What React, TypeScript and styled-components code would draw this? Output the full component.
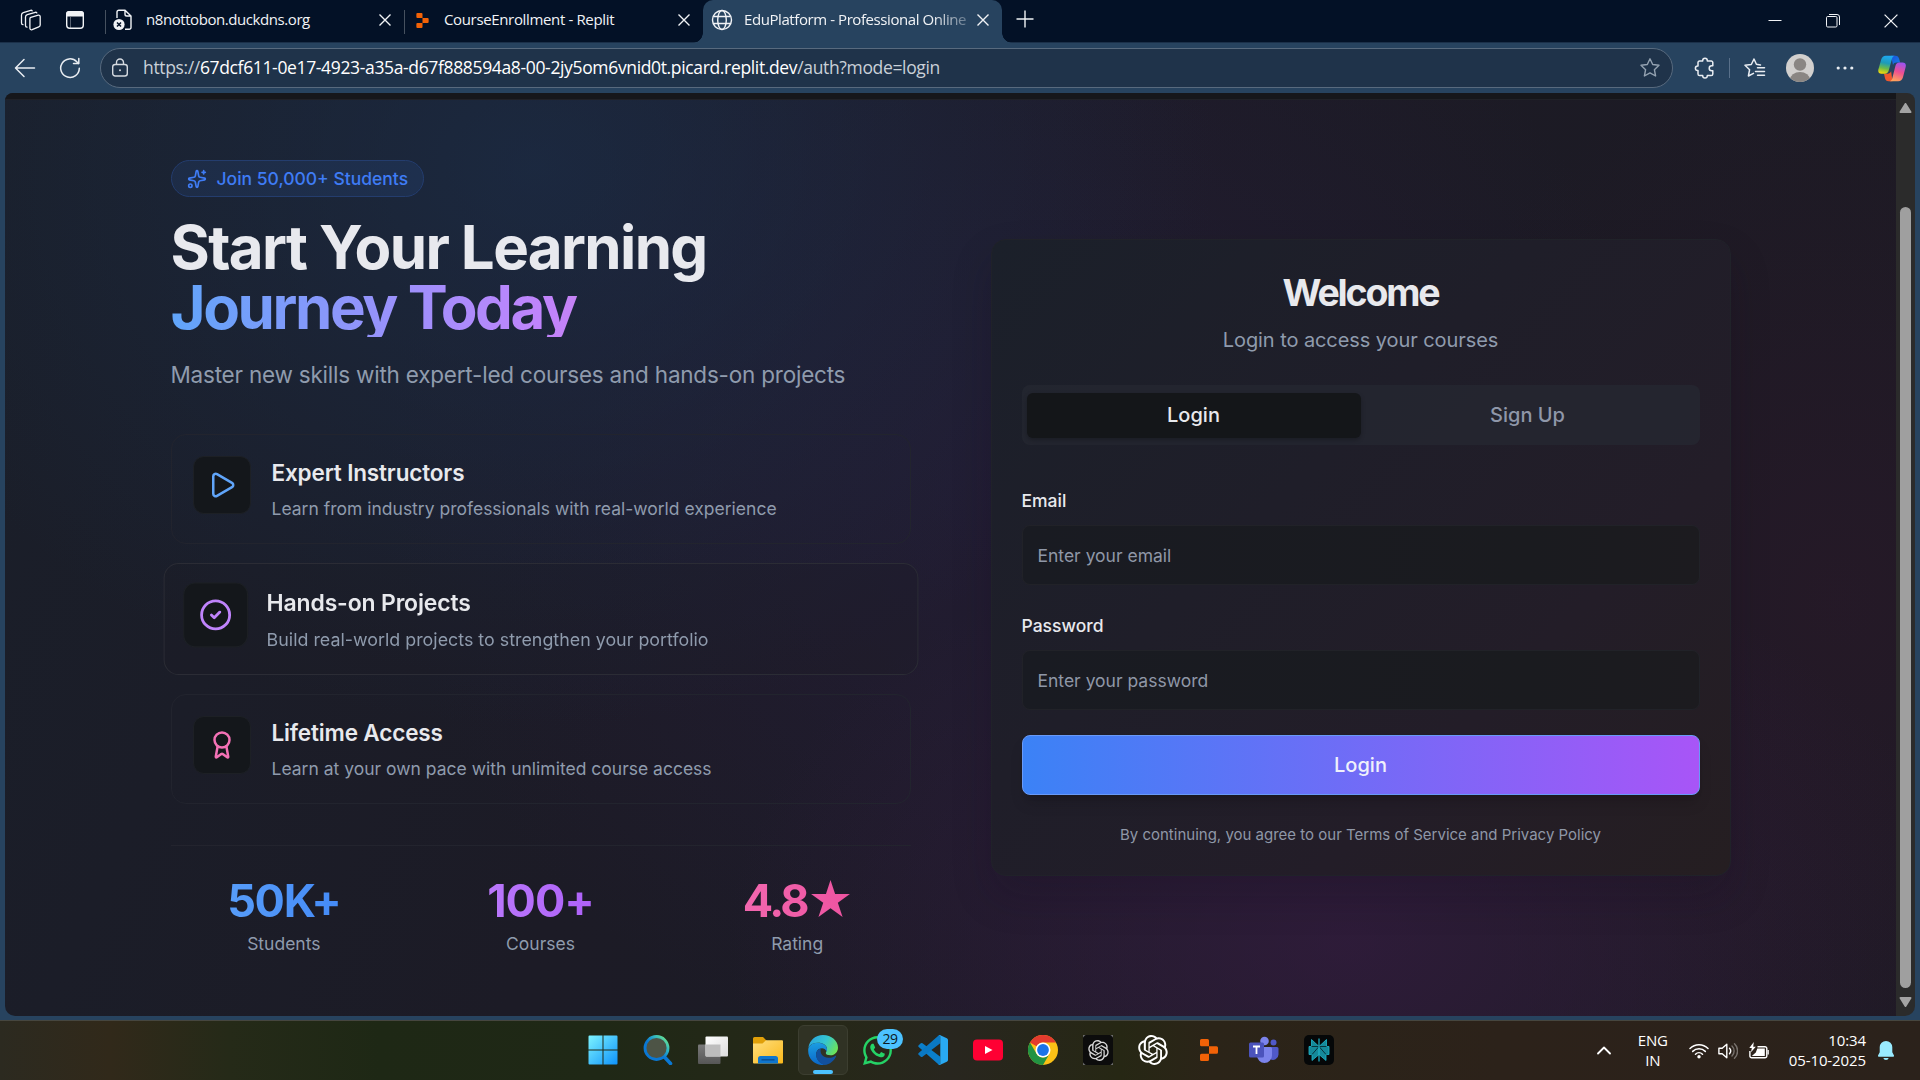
import React from "react";
import styled, { createGlobalStyle, css } from "styled-components";
import { Sparkles, Play, CircleCheck, Award } from "lucide-react";
import { FaWhatsapp } from "react-icons/fa";
import { RiOpenaiFill } from "react-icons/ri";

const ui = `"Open Sans", "Noto Sans", sans-serif`;
const inter = `Inter, "DejaVu Sans", sans-serif`;

const GlobalStyle = createGlobalStyle`
  * { box-sizing: border-box; }
  body { margin: 0; background: #031126; overflow: hidden; }
  h1, h2, h3, p { margin: 0; }
  button, input { font: inherit; color: inherit; }
`;

const Screen = styled.div`
  width: 1920px;
  height: 1080px;
  display: flex;
  flex-direction: column;
  overflow: hidden;
  font-family: ${ui};
  background: #27435f;
`;

/* ---------- browser: tab strip ---------- */

const TabStrip = styled.header`
  height: 43px;
  flex: none;
  display: flex;
  background: #031126;
  border-bottom: 1px solid #1b3049;
  color: #f1f3f6;
`;

const StripTools = styled.div`
  width: 105px;
  display: flex;
  align-items: center;
  padding: 0 0 2px 20px;
  gap: 23px;
`;

const Tab = styled.div<{ $active?: boolean; $width: number }>`
  position: relative;
  width: ${(p) => p.$width}px;
  height: 43px;
  display: flex;
  align-items: center;
  padding: 0 13px 3px 8px;
  ${(p) =>
    p.$active
      ? css`
          background: #27435f;
          border-radius: 10px 10px 0 0;
          &::before,
          &::after {
            content: "";
            position: absolute;
            bottom: 0;
            width: 10px;
            height: 10px;
          }
          &::before {
            left: -10px;
            background: radial-gradient(circle at 0 0, transparent 9.5px, #27435f 10px);
          }
          &::after {
            right: -10px;
            background: radial-gradient(circle at 100% 0, transparent 9.5px, #27435f 10px);
          }
        `
      : css`
          &::before {
            content: "";
            position: absolute;
            left: 0;
            top: 10px;
            height: 24px;
            width: 1px;
            background: #46515f;
          }
        `}
`;

const TabIcon = styled.span<{ $gap: number; $left?: number }>`
  display: flex;
  flex: none;
  margin-left: ${(p) => p.$left ?? 0}px;
  margin-right: ${(p) => p.$gap}px;
`;

const TabTitle = styled.span<{ $spacing: number; $fade?: boolean }>`
  flex: 1;
  min-width: 0;
  margin-top: -2px;
  white-space: nowrap;
  font-size: 15px;
  line-height: 22px;
  letter-spacing: ${(p) => p.$spacing}px;
  ${(p) => p.$fade && "-webkit-mask-image: linear-gradient(90deg, #000 84%, rgba(0, 0, 0, 0.3) 100%);"}
`;

const CloseButton = styled.span`
  display: flex;
  flex: none;
`;

const NewTab = styled.div`
  display: flex;
  align-items: center;
  padding: 0 0 4px 14px;
`;

const WindowButtons = styled.div`
  margin-left: auto;
  display: flex;
`;

const WindowButton = styled.div`
  width: 58px;
  display: flex;
  align-items: center;
  justify-content: center;
`;

/* ---------- browser: toolbar ---------- */

const Toolbar = styled.div`
  height: 50px;
  flex: none;
  display: flex;
  align-items: center;
  padding: 0 12px 0 14px;
  color: #e9edf2;
`;

const NavButtons = styled.div`
  width: 86px;
  display: flex;
  align-items: center;
  gap: 23px;
`;

const AddressBar = styled.div`
  width: 1573px;
  height: 40px;
  border: 1px solid #586a7e;
  border-radius: 20px;
  background: #1f334a;
  display: flex;
  align-items: center;
  padding: 0 11px 0 10px;
`;

const Url = styled.span`
  flex: 1;
  margin: -2px 0 0 14px;
  font-size: 17.5px;
  line-height: 24px;
  white-space: nowrap;
  letter-spacing: -0.35px;
  color: #c9d0d8;
`;

const UrlHost = styled.span`
  color: #ffffff;
`;

const ToolbarActions = styled.div`
  flex: 1;
  display: flex;
  align-items: center;
  padding-left: 21px;
`;

const ToolbarDivider = styled.span`
  width: 1px;
  height: 20px;
  margin: 0 13px 0 13px;
  background: #59708a;
`;

const Slot = styled.span<{ $left: number }>`
  display: flex;
  margin-left: ${(p) => p.$left}px;
`;

/* ---------- page ---------- */

const Viewport = styled.main`
  width: 1910px;
  height: 923px;
  flex: none;
  margin-left: 5px;
  display: flex;
  overflow: hidden;
  border-radius: 8px 8px 10px 10px;
`;

const Page = styled.div`
  width: 1891px;
  display: flex;
  flex-direction: column;
  font-family: ${inter};
  background: radial-gradient(ellipse 680px 560px at 28% 8%, rgba(27, 46, 74, 0.68), transparent 100%),
    radial-gradient(ellipse 620px 420px at 71% 92%, rgba(54, 28, 66, 0.68), transparent 100%),
    radial-gradient(ellipse 640px 600px at 54% 42%, rgba(40, 29, 62, 0.55), transparent 100%),
    radial-gradient(ellipse 460px 560px at 97% 55%, rgba(44, 24, 42, 0.55), transparent 100%),
    linear-gradient(115deg, #1a1f2a 0%, #1c1b26 40%, #1c1a23 100%);
`;

const NavEdge = styled.div`
  height: 7px;
  flex: none;
  background: #16171b;
  border-bottom: 1px solid #202127;
`;

const Columns = styled.div`
  width: 1560px;
  margin: 60px auto 0;
  display: grid;
  grid-template-columns: 740px 740px;
  column-gap: 80px;
  align-items: start;
`;

const Intro = styled.section`
  display: flex;
  flex-direction: column;
  align-items: flex-start;
`;

const Pill = styled.div`
  height: 37px;
  display: flex;
  align-items: center;
  gap: 10px;
  padding: 0 15px;
  border: 1px solid #243d6e;
  border-radius: 19px;
  background: rgba(59, 130, 246, 0.1);
  color: #3f7cf5;
  font-size: 17.5px;
  font-weight: 500;
`;

const Headline = styled.h1`
  width: 100%;
  margin-top: 20px;
  font-size: 60px;
  line-height: 60px;
  font-weight: 700;
  letter-spacing: -1.63px;
  color: #e8e9ee;
`;

const HeadlineAccent = styled.span`
  display: block;
  letter-spacing: -2.4px;
  color: transparent;
  background: linear-gradient(90deg, #60a5fa, #c084fc, #f472b6);
  -webkit-background-clip: text;
  background-clip: text;
`;

const Lead = styled.p`
  margin-top: 20px;
  font-size: 22.5px;
  line-height: 35px;
  letter-spacing: -0.215px;
  color: #8f9bad;
`;

const FeatureList = styled.div`
  width: 100%;
  margin-top: 42px;
  display: grid;
  gap: 20px;
`;

const FeatureIcon = styled.div<{ $color: string }>`
  width: 58px;
  height: 58px;
  flex: none;
  display: flex;
  align-items: center;
  justify-content: center;
  border: 1px solid #1d2025;
  border-radius: 11px;
  background: #14171b;
  color: ${(p) => p.$color};
`;

const FeatureCard = styled.article<{ $raised?: boolean }>`
  height: 110px;
  display: flex;
  gap: 21px;
  padding: 21px;
  border: 1px solid ${(p) => (p.$raised ? "#2b2c35" : "#22242e")};
  border-radius: 15px;
  ${(p) =>
    p.$raised &&
    css`
      transform: scale(1.02);
      background: rgba(28, 27, 36, 0.25);
      ${FeatureIcon} {
        transform: scale(1.1);
      }
    `}
`;

const FeatureTitle = styled.h3`
  margin-top: -1px;
  font-size: 22.5px;
  line-height: 35px;
  font-weight: 600;
  letter-spacing: -0.15px;
  color: #e8e9ed;
`;

const FeatureText = styled.p`
  margin-top: 6px;
  font-size: 17.5px;
  line-height: 25px;
  color: #8f9bad;
`;

const Stats = styled.div`
  width: 100%;
  margin-top: 41px;
  padding-top: 30px;
  border-top: 1px solid #23242e;
  display: grid;
  grid-template-columns: repeat(3, 1fr);
  column-gap: 30px;
  text-align: center;
`;

const StatValue = styled.div<{ $from: string; $to: string; $spacing: number }>`
  font-size: 45px;
  line-height: 50px;
  font-weight: 700;
  letter-spacing: ${(p) => p.$spacing}px;
  color: transparent;
  background: linear-gradient(90deg, ${(p) => p.$from}, ${(p) => p.$to});
  -webkit-background-clip: text;
  background-clip: text;
`;

const StatLabel = styled.div`
  margin-top: 5px;
  font-size: 17.5px;
  line-height: 25px;
  color: #8f9bad;
`;

/* ---------- sign-in card ---------- */

const AuthCard = styled.section`
  margin-top: 79px;
  height: 637px;
  display: flex;
  flex-direction: column;
  padding: 30px 30px 0;
  border: 1px solid #202229;
  border-radius: 15px;
  background: linear-gradient(135deg, #1b202a 0%, #1f1e29 40%, #231d28 70%, #251e21 100%);
  box-shadow: 0 20px 40px rgba(20, 12, 30, 0.2);
`;

const CardTitle = styled.h2`
  text-align: center;
  font-size: 37.5px;
  line-height: 46px;
  font-weight: 700;
  letter-spacing: -2.2px;
  color: #e8e9ed;
`;

const CardSubtitle = styled.p`
  margin-top: 9px;
  text-align: center;
  font-size: 20px;
  line-height: 30px;
  letter-spacing: -0.08px;
  color: #8f9bad;
`;

const Segmented = styled.div`
  height: 60px;
  margin-top: 30px;
  display: grid;
  grid-template-columns: 1fr 1fr;
  align-items: center;
  padding: 0 5px;
  border-radius: 8px;
  background: rgba(38, 41, 50, 0.65);
`;

const Segment = styled.button<{ $active?: boolean }>`
  height: 45px;
  border: 0;
  border-radius: 6px;
  font-size: 20px;
  font-weight: 500;
  background: ${(p) => (p.$active ? "#141619" : "transparent")};
  color: ${(p) => (p.$active ? "#e8e9ed" : "#8f97a9")};
  box-shadow: ${(p) => (p.$active ? "0 2px 4px rgba(0, 0, 0, 0.25)" : "none")};
`;

const FieldLabel = styled.label<{ $top: number }>`
  margin-top: ${(p) => p.$top}px;
  font-size: 17.5px;
  line-height: 18px;
  font-weight: 500;
  color: #e8e9ed;
`;

const Field = styled.input`
  width: 100%;
  height: 60px;
  margin-top: 15px;
  padding: 0 15px;
  outline: none;
  border: 1px solid #212228;
  border-radius: 8px;
  background: linear-gradient(90deg, #191b22, #1a1b1f 75%, #1c1b1f);
  font-size: 17.5px;
  &::placeholder {
    color: #8f97a7;
    opacity: 1;
  }
`;

const Submit = styled.button`
  height: 60px;
  flex: none;
  margin-top: 25px;
  border: 1px solid #699af7;
  border-radius: 8px;
  background: linear-gradient(90deg, #3b82f6, #a855f7);
  box-shadow: 0 10px 15px -3px rgba(0, 0, 0, 0.15), 0 4px 6px -4px rgba(0, 0, 0, 0.15);
  font-size: 20px;
  font-weight: 500;
  color: #eff1fb;
`;

const Terms = styled.p`
  margin-top: 30px;
  text-align: center;
  font-size: 15px;
  line-height: 20px;
  color: #8f97a7;
`;

/* ---------- scrollbar ---------- */

const Scrollbar = styled.div`
  width: 19px;
  display: flex;
  flex-direction: column;
  align-items: center;
  padding: 10px 0 9px;
  background: #2b2b2b;
`;

const Thumb = styled.div`
  width: 11px;
  height: 781px;
  margin: 94px 0 auto;
  border-radius: 6px;
  background: #9f9f9f;
`;

/* ---------- taskbar ---------- */

const Taskbar = styled.footer`
  height: 60px;
  flex: none;
  margin-top: 4px;
  display: flex;
  border-top: 1px solid #46463f;
  background: linear-gradient(90deg, #2c2a20 0, #31291a 110px, #252a18 230px, #1e2815 380px, #1f2816 600px, #262818 830px, #28261f 950px, #262714 1120px, #2b2418 1210px, #2c221a 1500px, #2b221b 1920px);
`;

const AppRow = styled.div`
  display: flex;
  gap: 5.1px;
  padding: 4px 0 0 577.5px;
`;

const AppCell = styled.div<{ $active?: boolean }>`
  position: relative;
  width: 50px;
  height: 50px;
  display: flex;
  align-items: center;
  justify-content: center;
  border-radius: 6px;
  border: 1px solid ${(p) => (p.$active ? "#3c3e30" : "transparent")};
  background: ${(p) => (p.$active ? "#303224" : "transparent")};
`;

const RunningMark = styled.span`
  position: absolute;
  bottom: 0;
  width: 20px;
  height: 4px;
  border-radius: 2px;
  background: #4cc2ff;
`;

const CountBadge = styled.span`
  position: absolute;
  left: 23px;
  top: 3px;
  width: 26px;
  height: 20px;
  border-radius: 10px;
  background: #4cc2ff;
  color: #0b1a24;
  font-size: 14px;
  line-height: 20px;
  letter-spacing: -0.5px;
  text-align: center;
`;

const Tray = styled.div`
  margin-left: auto;
  display: flex;
  align-items: center;
  padding-right: 26px;
  color: #ffffff;
`;

const TrayText = styled.div<{ $align: "center" | "right"; $left: number; $spacing: number }>`
  margin: -2px 0 0 ${(p) => p.$left}px;
  text-align: ${(p) => p.$align};
  font-size: 15px;
  line-height: 20px;
  letter-spacing: ${(p) => p.$spacing}px;
  white-space: nowrap;
`;

/* ---------- drawings ---------- */

const Cross = ({ size = 12, w = 1.4 }: { size?: number; w?: number }) => (
  <svg width={size} height={size} viewBox="0 0 12 12" fill="none" stroke="currentColor" strokeWidth={w}>
    <path d="M.5.5l11 11M11.5.5l-11 11" />
  </svg>
);

const WorkspacesIcon = () => (
  <svg width="22" height="22" viewBox="0 0 22 22" fill="none" stroke="currentColor" strokeWidth="1.3" strokeLinejoin="round" strokeLinecap="round">
    <path d="M10.800 8.300 18.300 6.200a1.500 1.500 0 0 1 1.900 1.500v8.200a2 2 0 0 1-1.400 1.900l-6.700 2.900a1.600 1.600 0 0 1-2.200-1.500V9.800a1.600 1.600 0 0 1 .9-1.500z" />
    <path d="M7 18.200a1.700 1.700 0 0 1-1.500-1.700V8.100A2.600 2.600 0 0 1 7.300 5.700l8-2.400a1.400 1.400 0 0 1 1.500.6" />
    <path d="M3 15.600a1.700 1.700 0 0 1-1.500-1.700V6a2.600 2.600 0 0 1 1.800-2.400L10.700 1.300a1.400 1.400 0 0 1 1.500.5" />
  </svg>
);

const TabActionsIcon = () => (
  <svg width="20" height="20" viewBox="0 0 20 20">
    <rect x="1.700" y="1.700" width="16.600" height="16.600" rx="3" fill="none" stroke="currentColor" strokeWidth="1.400" />
    <path d="M1 6.500V4a3 3 0 0 1 3-3h12a3 3 0 0 1 3 3v2.500z" fill="currentColor" />
    <path d="M5.500 7v11" stroke="currentColor" strokeWidth="1" opacity=".35" />
  </svg>
);

const BrokenPageIcon = () => (
  <svg width="20" height="22" viewBox="0 0 20 22">
    <path d="M4 9V3a1.800 1.800 0 0 1 1.800-1.800H12L18 7v11.500a1.800 1.800 0 0 1-1.800 1.800H12M12 1.200V5.200A1.800 1.800 0 0 0 13.800 7H18" fill="none" stroke="currentColor" strokeWidth="1.400" />
    <circle cx="6" cy="15.500" r="5.600" fill="currentColor" />
    <path d="M4 13.500l4 4M8 13.500l-4 4" stroke="#031126" strokeWidth="1.500" />
  </svg>
);

const ReplitIcon = ({ size, height }: { size: number; height: number }) => (
  <svg width={size} height={height} viewBox="0 0 18 22" fill="#f26207">
    <path d="M1.500 0H7.500A1.500 1.500 0 0 1 9 1.500V7.300H1.500A1.500 1.500 0 0 1 0 5.800V1.500A1.500 1.500 0 0 1 1.500 0zM9 7.300h7.500A1.500 1.500 0 0 1 18 8.800v4.400a1.500 1.500 0 0 1-1.500 1.500H9zM1.500 14.700H9v5.800A1.500 1.500 0 0 1 7.500 22h-6A1.500 1.500 0 0 1 0 20.500v-4.300a1.500 1.500 0 0 1 1.500-1.500z" />
  </svg>
);

const GlobeIcon = () => (
  <svg width="22" height="22" viewBox="0 0 22 22" fill="none" stroke="currentColor" strokeWidth="1.400">
    <circle cx="11" cy="11" r="9.500" />
    <ellipse cx="11" cy="11" rx="4.300" ry="9.500" />
    <path d="M2.300 7.500h17.400M2.300 14.500h17.400" />
  </svg>
);

const PlusIcon = () => (
  <svg width="18" height="18" viewBox="0 0 18 18" stroke="currentColor" strokeWidth="1.400">
    <path d="M9 .5v17M.5 9h17" />
  </svg>
);

const BackIcon = () => (
  <svg width="22" height="20" viewBox="0 0 22 20" fill="none" stroke="currentColor" strokeWidth="1.500" strokeLinecap="round" strokeLinejoin="round">
    <path d="M20.500 10H1.800M10 1.500 1.500 10 10 18.500" />
  </svg>
);

const ReloadIcon = () => (
  <svg width="22" height="22" viewBox="0 0 22 22" fill="none" stroke="currentColor" strokeWidth="1.500" strokeLinecap="round" strokeLinejoin="round">
    <path d="M20.300 11.200A9.300 9.300 0 1 1 17.800 4.800L19.800 6.600M19.800 1.500v5.100h-5.300" />
  </svg>
);

const LockIcon = () => (
  <svg width="18" height="20" viewBox="0 0 18 20" fill="none" stroke="#d5dae0" strokeWidth="1.400">
    <rect x="1.700" y="6.500" width="14.600" height="11.500" rx="2.500" />
    <path d="M5.500 6.500V4.500a3.500 3.500 0 0 1 7 0v2" />
    <circle cx="9" cy="12.200" r="1" fill="#d5dae0" stroke="none" />
  </svg>
);

const starPath = "M11 1.800 13.700 7.500 20 8.300 15.400 12.700 16.600 19 11 15.900 5.400 19 6.600 12.700 2 8.300 8.300 7.500z";

const StarIcon = () => (
  <svg width="22" height="22" viewBox="0 0 22 22" fill="none" stroke="#94a2b1" strokeWidth="1.400" strokeLinejoin="round">
    <path d={starPath} />
  </svg>
);

const PuzzleIcon = () => (
  <svg width="22" height="22" viewBox="0 0 22 22" fill="none" stroke="currentColor" strokeWidth="1.500" strokeLinejoin="round">
    <path d="M5.500 4H8.700V3.600a2.300 2.300 0 0 1 4.600 0V4h3.900a1.600 1.600 0 0 1 1.600 1.600V8.700H17.700a2.500 2.500 0 0 0 0 5h1.100v3.200a1.600 1.600 0 0 1-1.600 1.600h-3.900v.3a2.300 2.300 0 0 1-4.600 0v-.3H5.600A1.600 1.600 0 0 1 4 16.900v-3.400h-.3a2.300 2.300 0 0 1 0-4.600H4V5.500A1.500 1.500 0 0 1 5.500 4z" />
  </svg>
);

const FavoritesIcon = () => (
  <svg width="23" height="22" viewBox="0 0 23 22" fill="none" stroke="currentColor" strokeWidth="1.500" strokeLinejoin="round" strokeLinecap="round">
    <path d="M17.500 7.900 13.400 7.300 11 2 8.300 7.500 2 8.300 6.600 12.700 5.400 19 10.500 16.300M14.500 10.800h7M12.500 14.500h9M14.500 18.200h7" />
  </svg>
);

const AvatarIcon = () => (
  <svg width="28" height="28" viewBox="0 0 28 28">
    <defs>
      <clipPath id="avatarClip"><circle cx="14" cy="14" r="14" /></clipPath>
    </defs>
    <g clipPath="url(#avatarClip)">
      <rect width="28" height="28" fill="#d2d0ce" />
      <circle cx="14" cy="10.500" r="6.200" fill="#8a8683" />
      <ellipse cx="14" cy="26" rx="10" ry="8" fill="#8a8683" />
    </g>
  </svg>
);

const DotsIcon = () => (
  <svg width="18" height="4" viewBox="0 0 18 4" fill="currentColor">
    <circle cx="2.200" cy="2" r="1.600" /><circle cx="9" cy="2" r="1.600" /><circle cx="15.800" cy="2" r="1.600" />
  </svg>
);

const CopilotIcon = () => (
  <svg width="28" height="27" viewBox="0 0 28 27">
    <defs>
      <linearGradient id="copA" x1=".5" y1="0" x2=".3" y2="1">
        <stop offset="0" stopColor="#1fa8f0" /><stop offset=".4" stopColor="#1d9bb8" /><stop offset=".7" stopColor="#6cbb48" /><stop offset="1" stopColor="#f5d90a" />
      </linearGradient>
      <linearGradient id="copB" x1=".7" y1="0" x2=".4" y2="1">
        <stop offset="0" stopColor="#9b53f0" /><stop offset=".5" stopColor="#ee4f91" /><stop offset="1" stopColor="#ffa25c" />
      </linearGradient>
      <linearGradient id="copC" x1="0" y1="0" x2="1" y2="1">
        <stop offset="0" stopColor="#1a4fd8" /><stop offset="1" stopColor="#1583e8" />
      </linearGradient>
    </defs>
    <path d="M13 .8h4.500c2 0 3 1.200 3.600 3l1 3.700h-3.500c-2 0-3 .7-3.600 2.600z" fill="url(#copC)" />
    <path d="M14.500 26.200h-4c-2 0-3-1.200-3.500-3L6 18.700h3.500c2 0 3-.8 3.600-2.600z" fill="#f0582e" />
    <path d="M7.800.8H17c-1.700.3-2.500 1.300-3 3l-3.200 11.500c-.6 2.200-1.700 3.400-4 3.400H3.500C.7 18.700-.3 16.700.5 14L3.200 4.500C3.900 2.200 5.500.8 7.800.8z" fill="url(#copA)" />
    <path d="M20.300 26.200h-9c1.700-.3 2.500-1.300 3-3l3.100-12.200c.6-2.200 1.700-3.500 4-3.500h3.200c2.700 0 3.800 2 3 4.700l-2.700 10.300c-.7 2.300-2.300 3.700-4.600 3.700z" fill="url(#copB)" />
  </svg>
);

const Arrow = ({ down }: { down?: boolean }) => (
  <svg width="13" height="10" viewBox="0 0 13 10" fill="#a3a3a3">
    <path d={down ? "M1.500 0h10a1 1 0 0 1 .8 1.600L7.500 9.300a1.200 1.200 0 0 1-2 0L.7 1.600A1 1 0 0 1 1.500 0z" : "M1.500 10h10a1 1 0 0 0 .8-1.600L7.500.7a1.200 1.200 0 0 0-2 0L.7 8.400A1 1 0 0 0 1.500 10z"} />
  </svg>
);

const WindowsLogo = () => (
  <svg width="30" height="30" viewBox="0 0 30 30">
    <defs>
      <linearGradient id="win" x1="0" y1="0" x2="1" y2="1">
        <stop offset="0" stopColor="#7df3ff" /><stop offset="1" stopColor="#0e93fb" />
      </linearGradient>
    </defs>
    <path d="M1.500.5H14.500V14.500H.5V1.500a1 1 0 0 1 1-1zM15.500.5h13a1 1 0 0 1 1 1v13h-14zM.5 15.500h14v14h-13a1 1 0 0 1-1-1zM15.500 15.500h14v13a1 1 0 0 1-1 1h-13z" fill="url(#win)" />
  </svg>
);

const SearchLogo = () => (
  <svg width="30" height="30" viewBox="0 0 30 30">
    <defs>
      <linearGradient id="lens" x1="0" y1="1" x2="1" y2="0">
        <stop offset=".45" stopColor="#0a78d4" /><stop offset=".7" stopColor="#2fb6c4" /><stop offset="1" stopColor="#7df07a" />
      </linearGradient>
    </defs>
    <path d="M21 21.500l6.500 7" stroke="#0a78d4" strokeWidth="3.600" strokeLinecap="round" />
    <circle cx="13.500" cy="13" r="11.500" fill="#4d5446" stroke="url(#lens)" strokeWidth="2.800" />
  </svg>
);

const TaskViewLogo = () => (
  <svg width="30" height="30" viewBox="0 0 30 30">
    <defs>
      <linearGradient id="tvBack" x1="0" y1="0" x2="0" y2="1"><stop offset="0" stopColor="#7a7a7a" /><stop offset="1" stopColor="#565656" /></linearGradient>
      <linearGradient id="tvFront" x1="0" y1="0" x2="1" y2="1"><stop offset="0" stopColor="#ffffff" /><stop offset="1" stopColor="#dcdcdc" /></linearGradient>
    </defs>
    <rect x="0" y="9.500" width="22.500" height="19.500" rx="1" fill="url(#tvBack)" />
    <rect x="7.500" y="1.500" width="22.500" height="20" rx="1" fill="url(#tvFront)" />
    <path d="M7.500 9.500h15v12h-14a1 1 0 0 1-1-1z" fill="#bdbdbd" />
  </svg>
);

const ExplorerLogo = () => (
  <svg width="30" height="30" viewBox="0 0 30 30">
    <defs>
      <linearGradient id="folder" x1="0" y1="0" x2="1" y2="1"><stop offset="0" stopColor="#ffdf7e" /><stop offset="1" stopColor="#fab81a" /></linearGradient>
    </defs>
    <path d="M0 3.500A1.500 1.500 0 0 1 1.500 2H10l3.500 3.500V9H0z" fill="#e0a009" />
    <path d="M0 8.500h9.500l3.500-3.300h16a1 1 0 0 1 1 1V27.500a1 1 0 0 1-1 1H1a1 1 0 0 1-1-1z" fill="url(#folder)" />
    <path d="M5 28.500V23.500a2.500 2.500 0 0 1 2.500-2.500h15a2.500 2.500 0 0 1 2.500 2.500v5z" fill="#0f76ce" />
    <rect x="8.500" y="24.200" width="13" height="1.300" fill="#0a4a8c" />
  </svg>
);

const EdgeLogo = () => (
  <svg width="30" height="30" viewBox="0 0 30 30">
    <defs>
      <linearGradient id="edgeTop" x1="0" y1=".3" x2="1" y2=".7"><stop offset="0" stopColor="#2aa6df" /><stop offset=".5" stopColor="#35c6d0" /><stop offset="1" stopColor="#6fe552" /></linearGradient>
      <linearGradient id="edgeSide" x1=".4" y1="0" x2=".5" y2="1"><stop offset="0" stopColor="#1b9de2" /><stop offset="1" stopColor="#0a66c8" /></linearGradient>
    </defs>
    <path d="M.4 12.500C1.500 5.300 7.500 0 15 0c8.500 0 15 6 15 12.500 0 4.500-3.200 7.800-7.500 7.800-3 0-4.700-1-4.700-2.300 0-1 1.200-1.600 1.200-3.800C19 10.500 15 7.800 10 7.800 5.500 7.800 2 9.800.4 12.500z" fill="url(#edgeTop)" />
    <path d="M.2 14.500C.5 10.500 4.500 7.700 9.800 7.700c5.200 0 9.200 2.900 9.200 6.500 0 .8-.2 1.500-.6 2.200-.8-2-2.500-3.100-4.400-3.100-3.500 0-5.800 2.800-5.800 6.300 0 5 3.800 9 8.800 10.300C8 31.200.2 24.500.2 16z" fill="url(#edgeSide)" />
    <path d="M8.100 19.500c0-3 1.900-5.500 4.800-6-1.300 3.500.8 9.300 7.800 9.300 3.200 0 5.300-1.300 6.500-1.900.7-.3 1.200.2.800.9C26.300 25.300 22 29.900 16.500 29.900 11.500 28.500 8.100 24.500 8.100 19.500z" fill="#12509d" />
  </svg>
);

const VsCodeLogo = () => (
  <svg width="30" height="30" viewBox="0 0 30 30">
    <path d="M.7 10.200l2.100-1.900a1.300 1.300 0 0 1 1.700 0L22.300 21.700v8.100a2 2 0 0 1-2-.5L.7 12a1.200 1.200 0 0 1 0-1.800z" fill="#0b7fcb" />
    <path d="M.7 19.800l2.100 1.900a1.300 1.300 0 0 0 1.700 0L22.300 8.300V.2a2 2 0 0 0-2 .5L.7 18a1.200 1.200 0 0 0 0 1.800z" fill="#0a79c4" />
    <path d="M22.300.2 28.800 3.300A2 2 0 0 1 30 5.100V24.900a2 2 0 0 1-1.200 1.800l-6.500 3.100a2 2 0 0 1-2-.4c.8.500 2 .1 2-1V1.700c0-1.200-1.300-1.700-2-1a2 2 0 0 1 2-.5z" fill="#29a9f2" />
  </svg>
);

const YouTubeLogo = () => (
  <svg width="30" height="30" viewBox="0 0 30 30">
    <rect x="0" y="4.500" width="30" height="21" rx="4" fill="#ff0033" />
    <path d="M12 11l7.500 4-7.500 4z" fill="#fff" />
  </svg>
);

const ChromeLogo = () => (
  <svg width="30" height="30" viewBox="0 0 30 30">
    <circle cx="15" cy="15" r="15" fill="#fbc116" />
    <path d="M2 7.500A15 15 0 0 1 28 7.500H15A7.500 7.500 0 0 0 8.500 11.300z" fill="#e33b2e" />
    <path d="M2 7.500A15 15 0 0 0 15 30L21.500 18.750A7.500 7.500 0 0 1 8.500 18.750z" fill="#229342" />
    <circle cx="15" cy="15" r="7.500" fill="#fff" />
    <circle cx="15" cy="15" r="5.900" fill="#1a73e8" />
  </svg>
);

const GptTile = styled.div`
  width: 30px;
  height: 30px;
  display: flex;
  align-items: center;
  justify-content: center;
  background: radial-gradient(circle at 50% 50%, #0c0c0c 19px, #6b6b6b 20px);
  color: #d6d6d6;
`;

const TeamsLogo = () => (
  <svg width="30" height="30" viewBox="0 0 30 30">
    <circle cx="24.500" cy="7.500" r="3" fill="#5059c9" />
    <path d="M20 12h8a1.500 1.500 0 0 1 1.500 1.500v6a5.500 5.500 0 0 1-8.500 4.500z" fill="#5059c9" />
    <circle cx="15.500" cy="6" r="4.300" fill="#7b83eb" />
    <path d="M8.500 12h13a1.500 1.500 0 0 1 1.500 1.500v7a7.500 7.500 0 0 1-15 0v-7z" fill="#7b83eb" />
    <rect x="0" y="7.500" width="15" height="15" rx="1.500" fill="#4b53bc" />
    <path d="M4 11.500h7M7.500 11.500v7.500" stroke="#fff" strokeWidth="1.800" />
  </svg>
);

const PerplexityLogo = () => (
  <svg width="30" height="30" viewBox="0 0 30 30">
    <rect width="30" height="30" rx="5" fill="#050708" />
    <g strokeLinejoin="round">
      <path d="M7.500 4.500 15 11.500 22.500 4.500V11.500H25V19.500H22V25.500L15 19.500 8 25.500V19.500H5V11.500H7.500z" fill="#15899a" stroke="#20b8cd" strokeWidth=".8" />
      <path d="M7.500 11.500h15M15 11.500 8 19.500M15 11.500l7 8" fill="none" stroke="#07333c" strokeWidth="1" />
      <path d="M15 3.500v23" stroke="#20b8cd" strokeWidth="1.200" />
    </g>
  </svg>
);

const ChevronUp = () => (
  <svg width="14" height="9" viewBox="0 0 14 9" fill="none" stroke="currentColor" strokeWidth="1.800" strokeLinecap="round" strokeLinejoin="round">
    <path d="M1 7.500l6-6 6 6" />
  </svg>
);

const WifiIcon = () => (
  <svg width="20" height="16" viewBox="0 0 20 16" fill="none" stroke="currentColor" strokeWidth="1.500" strokeLinecap="round">
    <path d="M1 5.500a12.700 12.700 0 0 1 18 0M3.700 8.400a8.900 8.900 0 0 1 12.600 0M6.500 11.200a5 5 0 0 1 7 0" />
    <circle cx="10" cy="13.700" r="1.700" fill="currentColor" stroke="none" />
  </svg>
);

const VolumeIcon = () => (
  <svg width="20" height="18" viewBox="0 0 20 18" fill="none" stroke="currentColor" strokeWidth="1.400" strokeLinejoin="round" strokeLinecap="round">
    <path d="M.9 6.300h3.300L8.800 2.200v13.600l-4.600-4.100H.9zM11.500 6.300a4 4 0 0 1 0 5.400" />
    <path d="M14 4a7 7 0 0 1 0 10M16.500 1.800a10 10 0 0 1 0 14.400" stroke="#77716c" />
  </svg>
);

const BatteryIcon = () => (
  <svg width="20" height="17" viewBox="0 0 20 17">
    <path d="M8.500 4.700H16A1.800 1.800 0 0 1 17.800 6.500v7.500a1.800 1.800 0 0 1-1.800 1.800H2.700A1.800 1.800 0 0 1 .9 14V9" fill="none" stroke="currentColor" strokeWidth="1.400" />
    <path d="M8.300 6.500H15.800v7.400H2.800l4-3.400z" fill="currentColor" />
    <path d="M18.500 8h1.300v4.500h-1.300zM4.800 0 .3 6h2.500L2 10.300 6.800 4.700H4.200z" fill="currentColor" />
  </svg>
);

const BellIcon = () => (
  <svg width="16" height="20" viewBox="0 0 16 20" fill="#99ebff">
    <path d="M8 0a6.300 6.300 0 0 1 6.300 6.300v5L16 14.500a.8.8 0 0 1-.7 1.200H.7A.8.8 0 0 1 0 14.500l1.700-3.200v-5A6.300 6.300 0 0 1 8 0zM5.300 17h5.400a2.800 2.800 0 0 1-5.400 0z" />
  </svg>
);

/* ---------- data ---------- */

const features = [
  { title: "Expert Instructors", text: "Learn from industry professionals with real-world experience", color: "#60a5fa", icon: <Play size={30} /> },
  { title: "Hands-on Projects", text: "Build real-world projects to strengthen your portfolio", color: "#c084fc", icon: <CircleCheck size={30} />, raised: true },
  { title: "Lifetime Access", text: "Learn at your own pace with unlimited course access", color: "#f472b6", icon: <Award size={30} /> },
];

const stats = [
  { value: "50K+", label: "Students", from: "#60a5fa", to: "#3b82f6", spacing: -1.3 },
  { value: "100+", label: "Courses", from: "#c084fc", to: "#a855f7", spacing: -1 },
  { value: "4.8★", label: "Rating", from: "#f472b6", to: "#ec4899", spacing: -2.6 },
];

export default function App() {
  return (
    <Screen>
      <GlobalStyle />
      <TabStrip>
        <StripTools>
          <WorkspacesIcon />
          <TabActionsIcon />
        </StripTools>
        <Tab $width={299}>
          <TabIcon $gap={13}><BrokenPageIcon /></TabIcon>
          <TabTitle $spacing={-0.43}>n8nottobon.duckdns.org</TabTitle>
          <CloseButton><Cross /></CloseButton>
        </Tab>
        <Tab $width={299}>
          <TabIcon $gap={15} $left={4}><ReplitIcon size={13} height={15} /></TabIcon>
          <TabTitle $spacing={-0.35}>CourseEnrollment - Replit</TabTitle>
          <CloseButton><Cross /></CloseButton>
        </Tab>
        <Tab $width={299} $active>
          <TabIcon $gap={11}><GlobeIcon /></TabIcon>
          <TabTitle $spacing={-0.42} $fade>EduPlatform - Professional Online</TabTitle>
          <Slot $left={10}><Cross /></Slot>
        </Tab>
        <NewTab><PlusIcon /></NewTab>
        <WindowButtons>
          <WindowButton>
            <svg width="14" height="14" viewBox="0 0 14 14"><path d="M.5 6.500h13" stroke="currentColor" /></svg>
          </WindowButton>
          <WindowButton>
            <svg width="14" height="14" viewBox="0 0 14 14" fill="none" stroke="currentColor">
              <rect x=".5" y="2.500" width="10.500" height="10.500" rx="1.200" />
              <path d="M3 .5h8A2.500 2.500 0 0 1 13.500 3v8" />
            </svg>
          </WindowButton>
          <WindowButton><Cross size={14} w={1.1} /></WindowButton>
        </WindowButtons>
      </TabStrip>

      <Toolbar>
        <NavButtons>
          <BackIcon />
          <ReloadIcon />
        </NavButtons>
        <AddressBar>
          <LockIcon />
          <Url>
            https://<UrlHost>67dcf611-0e17-4923-a35a-d67f888594a8-00-2jy5om6vnid0t.picard.replit.dev</UrlHost>/auth?mode=login
          </Url>
          <StarIcon />
        </AddressBar>
        <ToolbarActions>
          <PuzzleIcon />
          <ToolbarDivider />
          <FavoritesIcon />
          <Slot $left={20}><AvatarIcon /></Slot>
          <Slot $left={22}><DotsIcon /></Slot>
          <Slot $left={24}><CopilotIcon /></Slot>
        </ToolbarActions>
      </Toolbar>

      <Viewport>
        <Page>
          <NavEdge />
          <Columns>
            <Intro>
              <Pill>
                <Sparkles size={20} />
                Join 50,000+ Students
              </Pill>
              <Headline>
                Start Your Learning
                <HeadlineAccent>Journey Today</HeadlineAccent>
              </Headline>
              <Lead>Master new skills with expert-led courses and hands-on projects</Lead>
              <FeatureList>
                {features.map((f) => (
                  <FeatureCard key={f.title} $raised={f.raised}>
                    <FeatureIcon $color={f.color}>{f.icon}</FeatureIcon>
                    <div>
                      <FeatureTitle>{f.title}</FeatureTitle>
                      <FeatureText>{f.text}</FeatureText>
                    </div>
                  </FeatureCard>
                ))}
              </FeatureList>
              <Stats>
                {stats.map((s) => (
                  <div key={s.label}>
                    <StatValue $from={s.from} $to={s.to} $spacing={s.spacing}>{s.value}</StatValue>
                    <StatLabel>{s.label}</StatLabel>
                  </div>
                ))}
              </Stats>
            </Intro>

            <AuthCard>
              <CardTitle>Welcome</CardTitle>
              <CardSubtitle>Login to access your courses</CardSubtitle>
              <Segmented>
                <Segment $active>Login</Segment>
                <Segment>Sign Up</Segment>
              </Segmented>
              <FieldLabel $top={47}>Email</FieldLabel>
              <Field placeholder="Enter your email" />
              <FieldLabel $top={32}>Password</FieldLabel>
              <Field placeholder="Enter your password" />
              <Submit>Login</Submit>
              <Terms>By continuing, you agree to our Terms of Service and Privacy Policy</Terms>
            </AuthCard>
          </Columns>
        </Page>
        <Scrollbar>
          <Arrow />
          <Thumb />
          <Arrow down />
        </Scrollbar>
      </Viewport>

      <Taskbar>
        <AppRow>
          <AppCell><WindowsLogo /></AppCell>
          <AppCell><SearchLogo /></AppCell>
          <AppCell><TaskViewLogo /></AppCell>
          <AppCell><ExplorerLogo /></AppCell>
          <AppCell $active><EdgeLogo /><RunningMark /></AppCell>
          <AppCell><FaWhatsapp size={33} color="#25d366" /><CountBadge>29</CountBadge></AppCell>
          <AppCell><VsCodeLogo /></AppCell>
          <AppCell><YouTubeLogo /></AppCell>
          <AppCell><ChromeLogo /></AppCell>
          <AppCell><GptTile><RiOpenaiFill size={25} /></GptTile></AppCell>
          <AppCell><RiOpenaiFill size={36} color="#fff" /></AppCell>
          <AppCell><ReplitIcon size={18} height={22} /></AppCell>
          <AppCell><TeamsLogo /></AppCell>
          <AppCell><PerplexityLogo /></AppCell>
        </AppRow>
        <Tray>
          <ChevronUp />
          <TrayText $align="center" $left={27} $spacing={-0.2}>ENG<br />IN</TrayText>
          <Slot $left={21}><WifiIcon /></Slot>
          <Slot $left={9}><VolumeIcon /></Slot>
          <Slot $left={11}><BatteryIcon /></Slot>
          <TrayText $align="right" $left={20} $spacing={-0.1}>10:34<br />05-10-2025</TrayText>
          <Slot $left={12}><BellIcon /></Slot>
        </Tray>
      </Taskbar>
    </Screen>
  );
}
